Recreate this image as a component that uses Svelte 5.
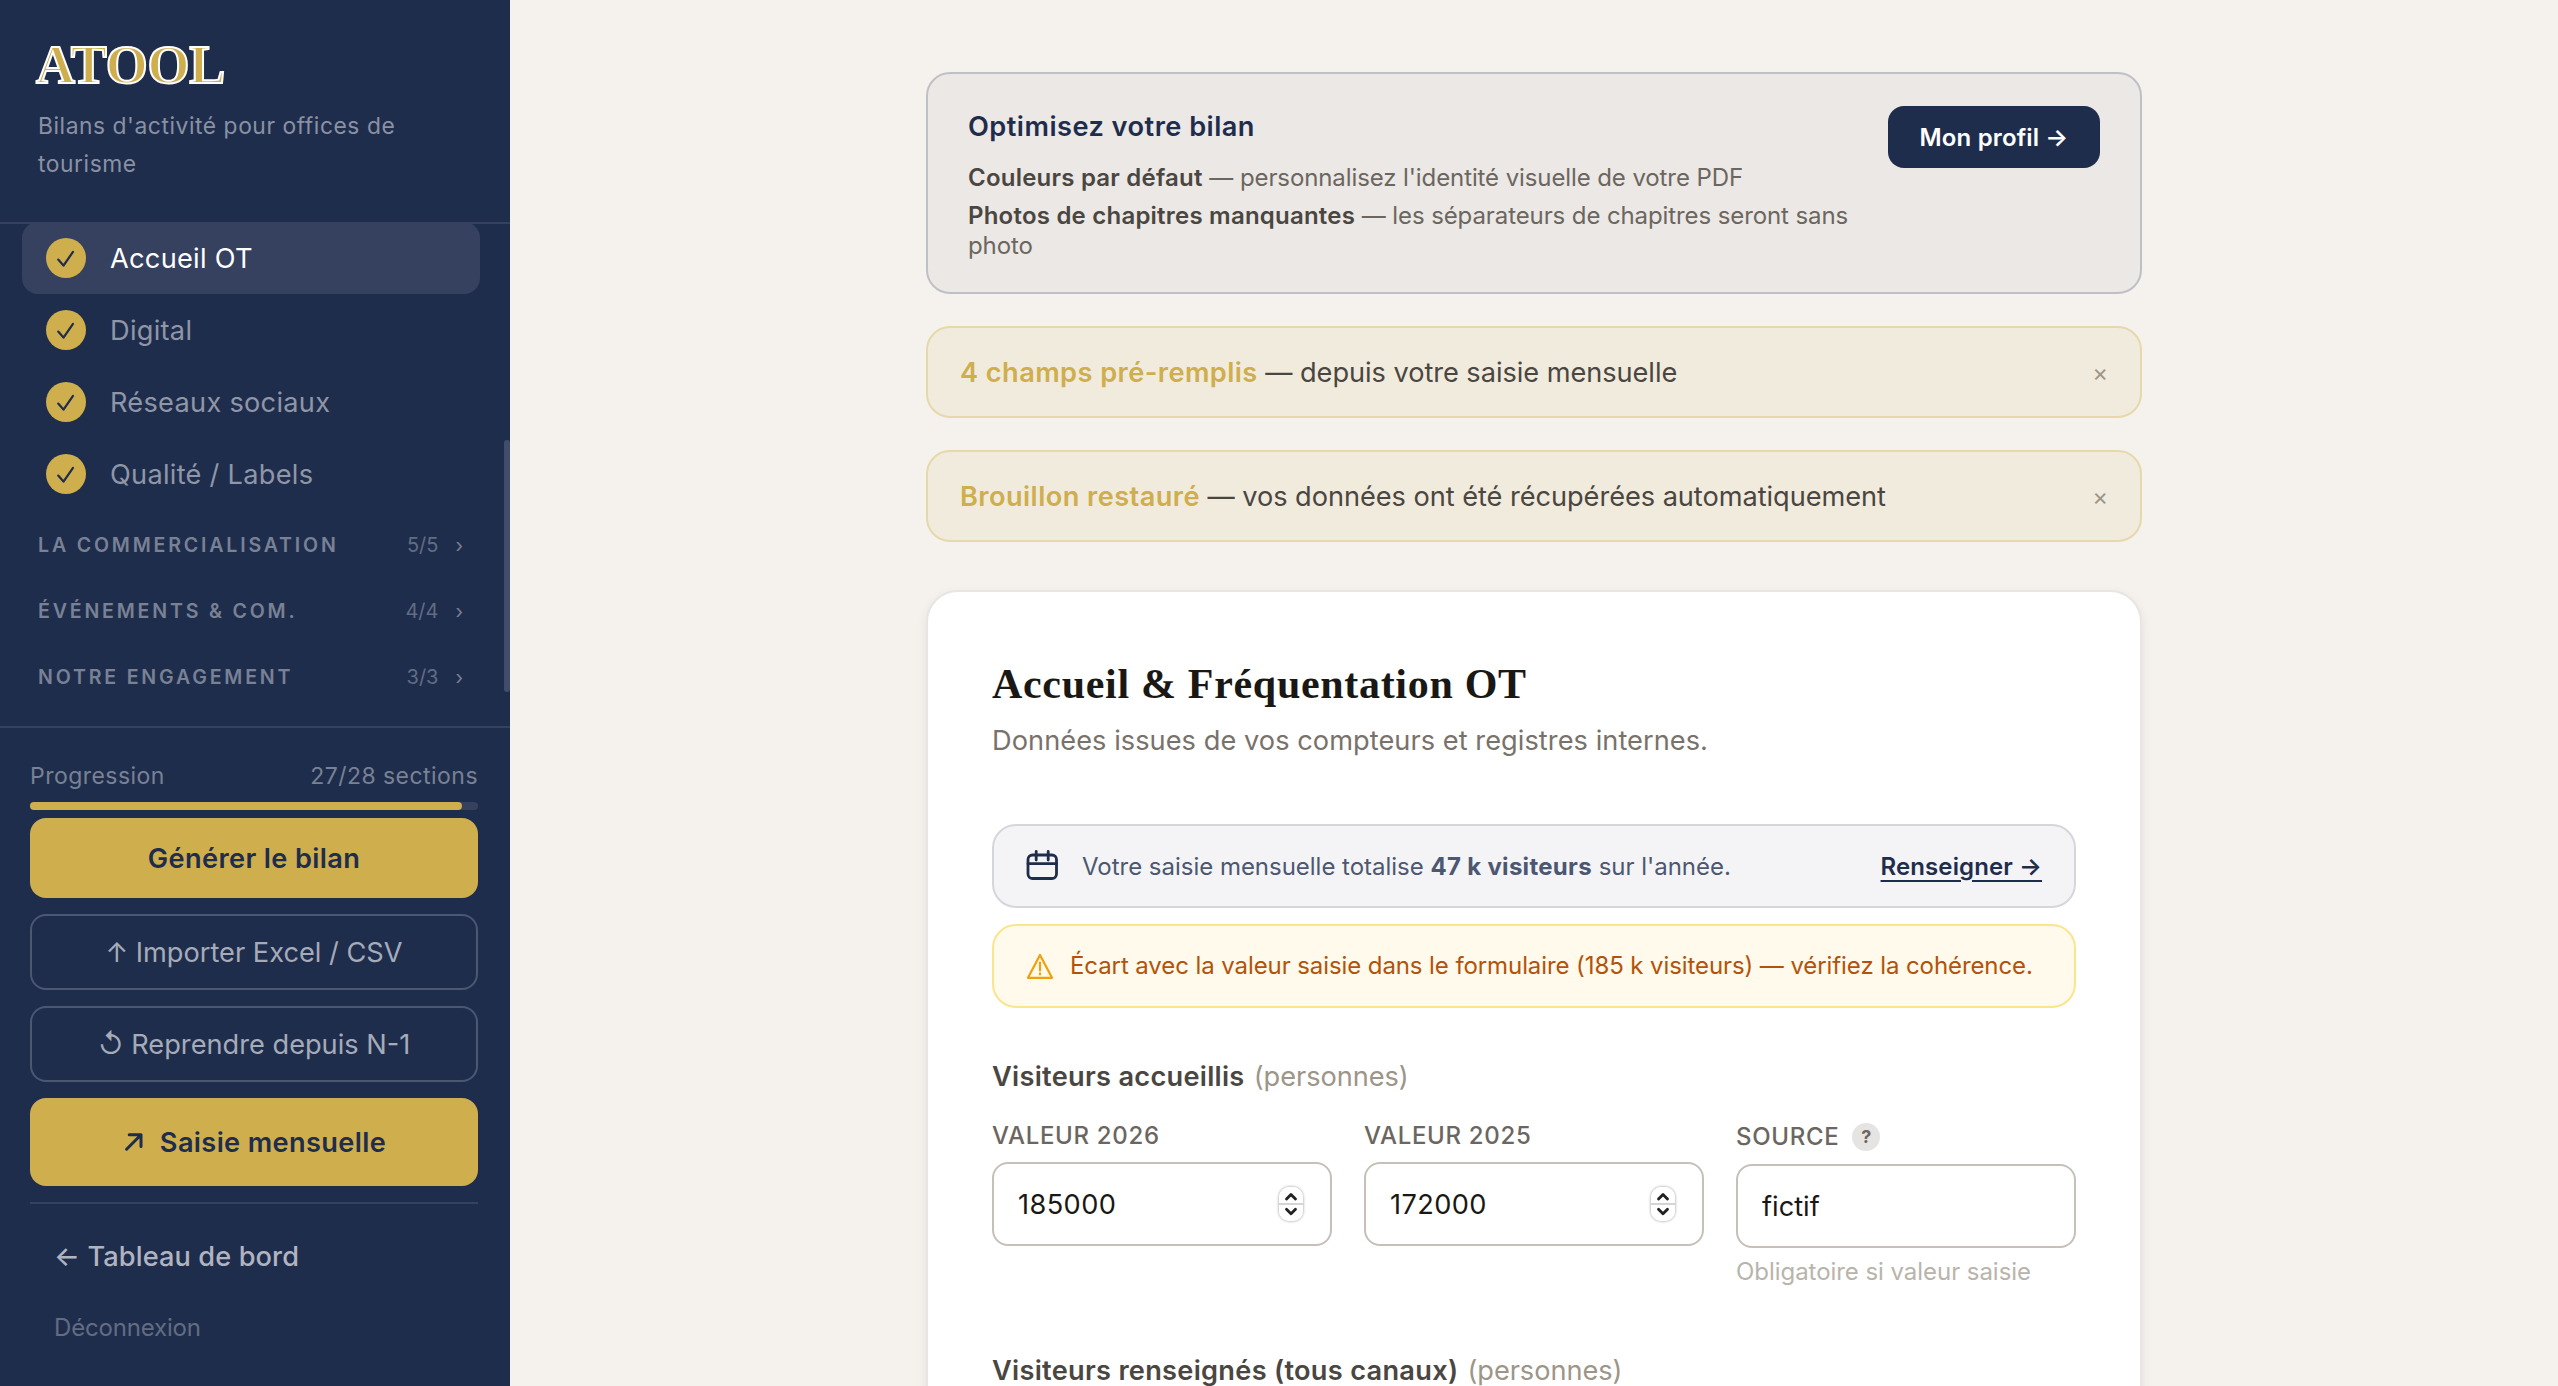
<script>
  const items = ['Accueil OT', 'Digital', 'Réseaux sociaux', 'Qualité / Labels'];
  const chapters = [
    { name: 'La commercialisation', count: '5/5' },
    { name: 'Événements & com.', count: '4/4' },
    { name: 'Notre engagement', count: '3/3' },
  ];
  const notices = [
    { title: '4 champs pré-remplis', text: 'depuis votre saisie mensuelle' },
    { title: 'Brouillon restauré', text: 'vos données ont été récupérées automatiquement' },
  ];

  let active = 'Accueil OT';
  let done = 27;
  let total = 28;
  let current = '185000';
  let previous = '172000';
  let source = 'fictif';
</script>

<div class="app">
  <aside>
    <header>
      <div class="logo">ATOOL</div>
      <p class="tagline">Bilans d'activité pour offices de tourisme</p>
    </header>

    <nav>
      <div class="list">
        {#each items as item}
          <button class="item" class:active={item === active} on:click={() => (active = item)}>
            <span class="check">
              <svg width="40" height="40" viewBox="0 0 40 40">
                <path d="M12.2 21.6 L17.5 27.6 L27 13.8" />
              </svg>
            </span>
            {item}
          </button>
        {/each}
        <div class="chapters">
          {#each chapters as chapter}
            <button class="chapter">
              <span class="name">{chapter.name}</span>
              <span class="count">{chapter.count}</span>
              <span class="chevron">›</span>
            </button>
          {/each}
        </div>
      </div>
      <div class="thumb"></div>
    </nav>

    <footer>
      <div class="progress-label">
        <span>Progression</span>
        <span>{done}/{total} sections</span>
      </div>
      <div class="progress">
        <div class="fill" style="width: {(done / total) * 100}%"></div>
      </div>
      <div class="actions">
        <button class="gold">Générer le bilan</button>
        <button class="outline">↑ Importer Excel / CSV</button>
        <button class="outline">↺ Reprendre depuis N-1</button>
        <button class="gold tall">
          <svg width="18" height="18" viewBox="0 0 18 18">
            <path d="M1.6 16.2 L16 1.8 M4.2 1.8 H16 V13.6" />
          </svg>
          Saisie mensuelle
        </button>
      </div>
      <div class="links">
        <a class="back" href="#dashboard">← Tableau de bord</a>
        <a class="logout" href="#logout">Déconnexion</a>
      </div>
    </footer>
  </aside>

  <main>
    <section class="tips">
      <div class="tips-text">
        <h2>Optimisez votre bilan</h2>
        <p><strong>Couleurs par défaut</strong> — personnalisez l'identité visuelle de votre PDF</p>
        <p>
          <strong>Photos de chapitres manquantes</strong> — les séparateurs de chapitres seront sans photo
        </p>
      </div>
      <button class="profile">Mon profil →</button>
    </section>

    {#each notices as notice}
      <div class="notice">
        <p><strong>{notice.title}</strong> — {notice.text}</p>
        <button class="close">×</button>
      </div>
    {/each}

    <section class="card">
      <h1>Accueil &amp; Fréquentation OT</h1>
      <p class="lead">Données issues de vos compteurs et registres internes.</p>

      <div class="banner info">
        <svg width="34" height="34" viewBox="0 0 34 34">
          <rect x="2" y="6" width="28.5" height="23.5" rx="4.5" />
          <path d="M2 14.7 H30.5 M10.2 2.5 V11 M22.2 2.5 V11" />
        </svg>
        <span class="text">
          Votre saisie mensuelle totalise <strong>47 k visiteurs</strong> sur l'année.
        </span>
        <a href="#monthly">Renseigner →</a>
      </div>

      <div class="banner warning">
        <svg width="28" height="28" viewBox="0 0 28 28">
          <path d="M14 3 L26 25.8 H2 Z M14 10.5 V18.4 M14 21.4 V22.4" />
        </svg>
        <span class="text">
          Écart avec la valeur saisie dans le formulaire (185 k visiteurs) — vérifiez la cohérence.
        </span>
      </div>

      <h3>Visiteurs accueillis <span>(personnes)</span></h3>
      <div class="fields">
        <div class="field">
          <label for="current">Valeur 2026</label>
          <div class="box">
            <input id="current" bind:value={current} />
            <span class="spinner">
              <svg width="24" height="34" viewBox="0 0 24 34">
                <path d="M7.5 12 L12 7.4 L16.5 12 M7.5 22.2 L12 26.8 L16.5 22.2" />
              </svg>
            </span>
          </div>
        </div>
        <div class="field">
          <label for="previous">Valeur 2025</label>
          <div class="box">
            <input id="previous" bind:value={previous} />
            <span class="spinner">
              <svg width="24" height="34" viewBox="0 0 24 34">
                <path d="M7.5 12 L12 7.4 L16.5 12 M7.5 22.2 L12 26.8 L16.5 22.2" />
              </svg>
            </span>
          </div>
        </div>
        <div class="field">
          <label class="with-help" for="source">Source <span class="help">?</span></label>
          <div class="box">
            <input id="source" bind:value={source} />
          </div>
          <p class="hint">Obligatoire si valeur saisie</p>
        </div>
      </div>

      <h3>Visiteurs renseignés (tous canaux) <span>(personnes)</span></h3>
    </section>
  </main>
</div>

<style>
  :global(body) {
    background: #f5f2ed;
    overflow: hidden;
  }
  .app {
    display: flex;
    height: 1386px;
    overflow: hidden;
    font-family: Inter, 'Liberation Sans', sans-serif;
    font-size: 27.2px;
    color: #4a4641;
  }
  h1,
  h2,
  h3,
  p {
    margin: 0;
  }
  button {
    font: inherit;
    border: none;
    background: none;
    padding: 0;
    letter-spacing: inherit;
  }
  a {
    text-decoration: none;
  }
  svg {
    display: block;
    flex: none;
    fill: none;
    stroke: currentColor;
    stroke-linecap: round;
    stroke-linejoin: round;
  }

  /* Sidebar */
  aside {
    display: flex;
    flex-direction: column;
    width: 510px;
    flex: none;
    background: #1f2d4d;
  }
  header {
    box-sizing: border-box;
    height: 224px;
    padding: 35px 38px 0 36px;
    border-bottom: 2px solid #35415e;
  }
  .logo {
    font-family: 'Liberation Serif', serif;
    font-size: 54px;
    font-weight: 700;
    line-height: 60px;
    letter-spacing: -0.2px;
    color: #ceae4d;
    -webkit-text-stroke: 2px #fff;
  }
  .tagline {
    margin: 12px 0 0 2px;
    font-size: 22.8px;
    line-height: 38px;
    letter-spacing: 0.56px;
    color: #8a91a2;
  }
  nav {
    display: flex;
    height: 502px;
    overflow: hidden;
  }
  .list {
    flex: 1;
    margin-top: -2px;
    padding: 0 24px 0 22px;
  }
  .item {
    display: flex;
    align-items: center;
    gap: 24px;
    width: 100%;
    height: 72px;
    padding-left: 24px;
    border-radius: 16px;
    letter-spacing: 0.27px;
    color: #8f96a6;
  }
  .item.active {
    background: #35415e;
    color: #fff;
  }
  .check {
    width: 40px;
    height: 40px;
    border-radius: 50%;
    background: #ceae4d;
    color: #1f2d4d;
  }
  .check svg {
    stroke-width: 2.2;
  }
  .chapters {
    margin-top: 2px;
  }
  .chapter {
    display: flex;
    align-items: center;
    width: 100%;
    height: 66px;
    padding: 0 17px 0 16px;
    font-size: 19.6px;
    color: #798194;
  }
  .name {
    flex: 1;
    text-align: left;
    font-weight: 600;
    letter-spacing: 2.8px;
    text-transform: uppercase;
  }
  .count {
    font-size: 20px;
    color: #626c82;
  }
  .chevron {
    margin-left: 17px;
  }
  .thumb {
    width: 6px;
    height: 252px;
    margin-top: 216px;
    border-radius: 3px;
    background: #424d69;
  }
  footer {
    flex: 1;
    padding: 29px 32px 0 30px;
    border-top: 2px solid #35415e;
  }
  .progress-label {
    display: flex;
    justify-content: space-between;
    height: 38px;
    margin-bottom: 7px;
    font-size: 23px;
    line-height: 38px;
    letter-spacing: 0.46px;
    color: #798194;
  }
  .progress {
    height: 8px;
    border-radius: 4px;
    background: #35415e;
  }
  .fill {
    height: 100%;
    border-radius: 4px;
    background: #ceae4d;
  }
  .actions {
    display: flex;
    flex-direction: column;
    gap: 16px;
    margin-top: 8px;
    padding-bottom: 16px;
    border-bottom: 2px solid #35415e;
  }
  .actions button {
    display: flex;
    align-items: center;
    justify-content: center;
    box-sizing: border-box;
    border-radius: 16px;
  }
  .gold {
    height: 80px;
    background: #ceae4d;
    color: #1f2d4d;
    font-weight: 600;
    letter-spacing: 0.36px;
  }
  .actions .tall {
    height: 88px;
    gap: 17px;
    padding-left: 3px;
  }
  .tall svg {
    stroke-width: 3;
  }
  .outline {
    height: 76px;
    border: 2px solid #4c5771;
    color: #a5abb8;
  }
  .links {
    display: flex;
    flex-direction: column;
    gap: 29px;
    padding: 30px 24px 0;
  }
  .back {
    line-height: 46px;
    font-weight: 500;
    letter-spacing: 0.1px;
    color: #b0b4c0;
  }
  .logout {
    font-size: 24px;
    line-height: 38px;
    letter-spacing: -0.18px;
    color: #626c82;
  }

  /* Content */
  main {
    width: 1216px;
    margin: 72px auto 0;
  }
  .tips {
    display: flex;
    align-items: flex-start;
    justify-content: space-between;
    box-sizing: border-box;
    height: 222px;
    padding: 32px 40px;
    border: 2px solid #bfc0c6;
    border-radius: 24px;
    background: #ece8e5;
    font-size: 24px;
    line-height: 30px;
    letter-spacing: -0.1px;
    color: #6b665f;
  }
  .tips-text {
    width: 890px;
    padding-top: 1px;
  }
  .tips strong {
    font-weight: 600;
    letter-spacing: 0.22px;
    color: #4a4641;
  }
  h2 {
    margin-bottom: 16px;
    font-size: 27.2px;
    font-weight: 600;
    line-height: 40px;
    letter-spacing: 0.47px;
    color: #1f2d4d;
  }
  .tips p + p {
    margin-top: 8px;
  }
  .profile {
    width: 212px;
    height: 62px;
    padding-top: 1px;
    border-radius: 16px;
    background: #1f2d4d;
    color: #fff;
    font-weight: 600;
    letter-spacing: 0.15px;
  }
  .notice {
    display: flex;
    align-items: center;
    justify-content: space-between;
    box-sizing: border-box;
    height: 92px;
    margin-top: 32px;
    padding: 0 32px;
    border: 2px solid #e6d8ab;
    border-radius: 24px;
    background: #f1ebdd;
    letter-spacing: -0.05px;
    color: #4a4641;
  }
  .notice strong {
    font-weight: 600;
    letter-spacing: 0.43px;
    color: #ceae4d;
  }
  .close {
    font-size: 24px;
    color: #9c9588;
  }
  .card {
    box-sizing: border-box;
    height: 900px;
    margin-top: 48px;
    padding: 64px;
    border: 2px solid #e8e5e3;
    border-radius: 32px;
    background: #fff;
    box-shadow: 0 4px 12px rgba(0, 0, 0, 0.07);
  }
  h1 {
    padding-top: 1px;
    font-family: 'Liberation Serif', serif;
    font-size: 42px;
    line-height: 54px;
    letter-spacing: 0.69px;
    color: #1a1814;
  }
  .lead {
    margin: 7px 0 60px;
    line-height: 46px;
    letter-spacing: 0.05px;
    color: #78726b;
  }
  .banner {
    display: flex;
    align-items: center;
    box-sizing: border-box;
    height: 84px;
    padding: 0 32px;
    border: 2px solid;
    border-radius: 24px;
    font-size: 24px;
    letter-spacing: -0.02px;
  }
  .banner .text {
    flex: 1;
    white-space: nowrap;
  }
  .info {
    border-color: #d5d6dc;
    background: #f4f4f6;
    color: #4c5771;
  }
  .info svg {
    margin-right: 22px;
    stroke-width: 2.8;
    color: #1f2d4d;
  }
  .info strong {
    font-weight: 700;
    letter-spacing: 0.3px;
  }
  .info a {
    color: #1f2d4d;
    font-weight: 600;
    letter-spacing: 0.1px;
    text-decoration: underline;
    text-underline-offset: 5px;
    text-decoration-thickness: 2px;
  }
  .warning {
    margin-top: 16px;
    padding-bottom: 1px;
    border-color: #fae58b;
    background: #fffaeb;
    color: #b35309;
    letter-spacing: -0.09px;
  }
  .warning svg {
    margin-right: 16px;
    stroke-width: 2.2;
    color: #f59e0b;
  }
  h3 {
    margin-top: 46px;
    font-size: 27.2px;
    font-weight: 600;
    line-height: 46px;
    letter-spacing: 0.28px;
    color: #4a4641;
  }
  h3 span {
    margin-left: 2px;
    font-weight: 400;
    letter-spacing: -0.06px;
    color: #9c9588;
  }
  .fields {
    display: grid;
    grid-template-columns: repeat(3, minmax(0, 1fr));
    gap: 32px;
    height: 174px;
    margin: 16px 0 58px;
  }
  label {
    display: block;
    margin-bottom: 6px;
    font-size: 24px;
    font-weight: 500;
    line-height: 40px;
    text-transform: uppercase;
    letter-spacing: 0.68px;
    color: #6b665f;
  }
  .with-help {
    display: flex;
    align-items: center;
    gap: 13px;
    height: 42px;
  }
  .help {
    width: 28px;
    height: 28px;
    border-radius: 50%;
    background: #e6e4e2;
    font-size: 18px;
    font-weight: 700;
    line-height: 28px;
    letter-spacing: 0;
    text-align: center;
  }
  .box {
    display: flex;
    align-items: center;
    box-sizing: border-box;
    height: 84px;
    padding: 0 27px 0 24px;
    border: 2px solid #c6c0b9;
    border-radius: 16px;
  }
  input {
    flex: 1;
    min-width: 0;
    padding: 0;
    border: none;
    outline: none;
    background: none;
    font: inherit;
    letter-spacing: 0.4px;
    color: #1a1814;
  }
  #source {
    letter-spacing: 0;
  }
  .spinner {
    width: 24px;
    height: 34px;
    border-radius: 10px;
    background: linear-gradient(#fff 16px, #d4d4d4 16px, #d4d4d4 18px, #fff 18px);
    box-shadow: 0 0 3px rgba(0, 0, 0, 0.45);
    color: #222;
  }
  .spinner svg {
    stroke-width: 2.8;
  }
  .hint {
    margin-top: 6px;
    font-size: 24px;
    line-height: 36px;
    letter-spacing: -0.05px;
    color: #b9b4ab;
  }
</style>
